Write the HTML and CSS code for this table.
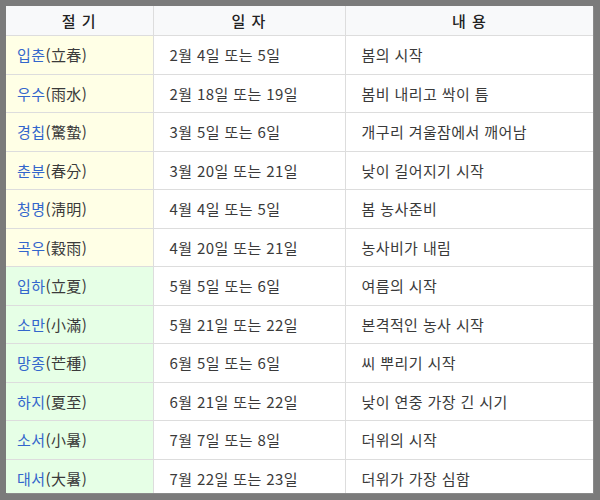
FILE: index.html
```html
<!DOCTYPE html>
<html lang="ko">
<head>
<meta charset="utf-8">
<link rel="stylesheet" href="styles.css">
</head>
<body>
<div class="frame">
<table class="seasons">
<colgroup><col class="c1"><col class="c2"><col class="c3"></colgroup>
<thead>
<tr><th>절 기</th><th>일 자</th><th>내 용</th></tr>
</thead>
<tbody>
<tr class="spring"><td><a>입춘</a>(立春)</td><td>2월 4일 또는 5일</td><td>봄의 시작</td></tr>
<tr class="spring"><td><a>우수</a>(雨水)</td><td>2월 18일 또는 19일</td><td>봄비 내리고 싹이 틈</td></tr>
<tr class="spring"><td><a>경칩</a>(驚蟄)</td><td>3월 5일 또는 6일</td><td>개구리 겨울잠에서 깨어남</td></tr>
<tr class="spring"><td><a>춘분</a>(春分)</td><td>3월 20일 또는 21일</td><td>낮이 길어지기 시작</td></tr>
<tr class="spring"><td><a>청명</a>(淸明)</td><td>4월 4일 또는 5일</td><td>봄 농사준비</td></tr>
<tr class="spring"><td><a>곡우</a>(穀雨)</td><td>4월 20일 또는 21일</td><td>농사비가 내림</td></tr>
<tr class="summer"><td><a>입하</a>(立夏)</td><td>5월 5일 또는 6일</td><td>여름의 시작</td></tr>
<tr class="summer"><td><a>소만</a>(小滿)</td><td>5월 21일 또는 22일</td><td>본격적인 농사 시작</td></tr>
<tr class="summer"><td><a>망종</a>(芒種)</td><td>6월 5일 또는 6일</td><td>씨 뿌리기 시작</td></tr>
<tr class="summer"><td><a>하지</a>(夏至)</td><td>6월 21일 또는 22일</td><td>낮이 연중 가장 긴 시기</td></tr>
<tr class="summer"><td><a>소서</a>(小暑)</td><td>7월 7일 또는 8일</td><td>더위의 시작</td></tr>
<tr class="summer"><td><a>대서</a>(大暑)</td><td>7월 22일 또는 23일</td><td>더위가 가장 심함</td></tr>
</tbody>
</table>
</div>
</body>
</html>
```
FILE: styles.css
```css
html, body {
  margin: 0;
  padding: 0;
  background: #7b7b7b;
}
.frame {
  margin: 6px;
  width: 587px;
  height: 487px;
  overflow: hidden;
  background: #fff;
  box-shadow: 1px 1px 0 #8a8a8a;
}
.seasons {
  border-collapse: collapse;
  width: 588px;
  table-layout: fixed;
  font-family: "Noto Sans CJK KR", "Noto Sans", sans-serif;
  font-size: 15px;
  letter-spacing: 0.4px;
  color: #3a3a3a;
}
.c1 { width: 147px; }
.c2 { width: 192px; }
.c3 { width: 249px; }
.seasons th {
  height: 29px;
  background: #f8f9fa;
  color: #222;
  font-weight: 500;
  letter-spacing: 1px;
  text-align: center;
  padding: 0;
  border: 1px solid #ddd;
  border-top: 0;
  border-left: 0;
}
.seasons td {
  height: 37.5px;
  padding: 0 0 0 16px;
  border: 1px solid #ddd;
  border-left: 0;
  white-space: nowrap;
}
.seasons td:first-child { padding-left: 11px; }
.spring td:first-child { background: #ffffe6; }
.summer td:first-child { background: #e6ffe6; }
.seasons a { color: #3366cc; }
```
